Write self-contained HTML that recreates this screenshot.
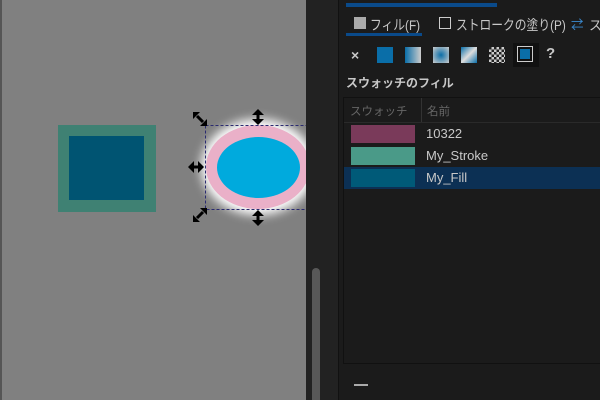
<!DOCTYPE html><html><head><style>
body{margin:0;width:600px;height:400px;overflow:hidden;background:#1c1c1c;font-family:"Liberation Sans","Noto Sans CJK JP",sans-serif;position:relative}
div{position:absolute;box-sizing:border-box}
.t{color:#c8c8c8;font-size:12.5px;white-space:nowrap}
.s{transform:scaleX(0.84);transform-origin:0 0}
</style></head><body>
<div style="left:0;top:0;width:306px;height:400px;background:#808080;border-left:2px solid #555"></div>
<div style="left:58px;top:125px;width:98px;height:87px;background:#3f8173"></div>
<div style="left:69px;top:136px;width:75px;height:64px;background:#005472"></div>
<svg style="position:absolute;left:0;top:0" width="306" height="400">
<defs><filter id="g" x="-30%" y="-30%" width="160%" height="160%"><feGaussianBlur stdDeviation="5"/></filter></defs>
<ellipse cx="258" cy="167" rx="57" ry="48" fill="#fff" filter="url(#g)"/>
<ellipse cx="258" cy="167" rx="52" ry="42" fill="#eab0c8"/>
<ellipse cx="258.5" cy="167.5" rx="41.5" ry="30.5" fill="#00aadd"/>
<rect x="205.5" y="125.5" width="110" height="84" fill="none" stroke="#2a2a70" stroke-dasharray="3,2"/>
<g stroke="#000" stroke-width="3" fill="#000">
<line x1="258" y1="111" x2="258" y2="123"/><path d="M252 115l6-6 6 6zM252 119l6 6 6-6z" stroke="none"/>
<line x1="258" y1="212" x2="258" y2="224"/><path d="M252 216l6-6 6 6zM252 220l6 6 6-6z" stroke="none"/>
<line x1="190" y1="167" x2="202" y2="167"/><path d="M194 161l-6 6 6 6zM198 161l6 6-6 6z" stroke="none"/>
<line x1="197" y1="116" x2="203" y2="122"/><path d="M193 112h7l-7 7z M207 126h-7l7-7z" stroke="none"/>
<line x1="197" y1="218" x2="203" y2="212"/><path d="M193 222h7l-7-7z M207 208h-7l7 7z" stroke="none"/>
</g></svg>
<div style="left:306px;top:0;width:32px;height:400px;background:#222"></div>
<div style="left:312px;top:268px;width:8px;height:132px;background:#585858;border-radius:4px 4px 0 0"></div>
<div style="left:338px;top:0;width:262px;height:400px;background:#1b1b1b;border-left:1px solid #111"></div>
<div style="left:346px;top:3px;width:151px;height:4px;background:#0a4a8a"></div>
<div style="left:346px;top:33px;width:76px;height:3px;background:#0a4a8a"></div>
<div style="left:354px;top:17px;width:12px;height:12px;background:#aaa"></div>
<div class="t s" style="left:370px;top:15px;font-size:14px">フィル(F)</div>
<div style="left:439px;top:17px;width:12px;height:12px;border:1.5px solid #ccc"></div>
<div class="t s" style="left:456px;top:15px;font-size:14px">ストロークの塗り(P)</div>
<div class="t" style="left:571px;top:14px;color:#3a8ad0">⇄</div><div class="t" style="left:589px;top:15px;font-size:13px">ス</div>
<div class="t" style="left:351px;top:47px;font-size:14px;font-weight:bold">×</div>
<div style="left:377px;top:47px;width:16px;height:16px;background:#0a6ea8"></div>
<div style="left:405px;top:47px;width:16px;height:16px;background:linear-gradient(90deg,#0a6ea8,#ccc)"></div>
<div style="left:433px;top:47px;width:16px;height:16px;background:radial-gradient(#0a6ea8,#ccc)"></div>
<div style="left:461px;top:47px;width:16px;height:16px;background:linear-gradient(135deg,#0a6ea8,#ddd,#0a6ea8)"></div>
<div style="left:489px;top:47px;width:16px;height:16px;background:repeating-conic-gradient(#ccc 0 25%,#222 0 50%) 0 0/5px 5px"></div>
<div style="left:513px;top:43px;width:26px;height:24px;background:#111"></div>
<div style="left:517px;top:46px;width:16px;height:16px;border:1.5px solid #ccc;background:#0a6ea8;box-shadow:inset 0 0 0 2px #111"></div>
<div class="t" style="left:546px;top:45px;font-size:15px;font-weight:bold">?</div>
<div class="t" style="left:346px;top:74px;font-weight:bold;font-size:12px">スウォッチのフィル</div>
<div style="left:343px;top:97px;width:257px;height:267px;border-left:1px solid #111;border-top:1px solid #111;border-bottom:1px solid #111"></div>
<div style="left:421px;top:98px;width:1px;height:24px;background:#333"></div>
<div style="left:344px;top:122px;width:256px;height:1px;background:#2a2a2a"></div>
<div class="t" style="left:350px;top:103px;color:#666;font-size:11.5px">スウォッチ</div>
<div class="t" style="left:427px;top:103px;color:#666;font-size:11.5px">名前</div>
<div style="left:344px;top:167px;width:256px;height:22px;background:#0c3054"></div>
<div style="left:351px;top:125px;width:64px;height:18px;background:#7a3a5a"></div>
<div style="left:351px;top:147px;width:64px;height:18px;background:#4a9a88"></div>
<div style="left:351px;top:169px;width:64px;height:18px;background:#005a78"></div>
<div class="t" style="left:426px;top:126px;font-size:13px">10322</div>
<div class="t" style="left:426px;top:148px;font-size:13px">My_Stroke</div>
<div class="t" style="left:426px;top:170px;font-size:13px">My_Fill</div>
<div style="left:354px;top:384px;width:14px;height:2px;background:#aaa"></div>
</body></html>
